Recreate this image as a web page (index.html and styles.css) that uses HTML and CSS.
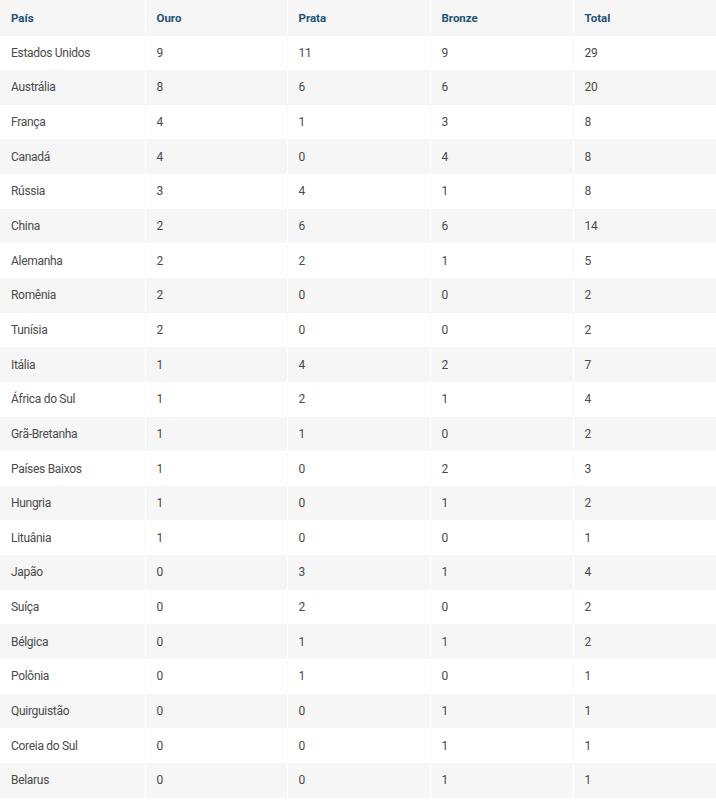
FILE: index.html
```html
<!DOCTYPE html>
<html lang="pt">
<head>
<meta charset="utf-8">
<link rel="stylesheet" href="styles.css">
</head>
<body>
<table class="medals">
<colgroup>
<col class="c-country"><col class="c-gold"><col class="c-silver"><col class="c-bronze"><col class="c-total">
</colgroup>
<thead>
<tr><th>País</th><th>Ouro</th><th>Prata</th><th>Bronze</th><th>Total</th></tr>
</thead>
<tbody>
<tr><td>Estados Unidos</td><td>9</td><td>11</td><td>9</td><td>29</td></tr>
<tr><td>Austrália</td><td>8</td><td>6</td><td>6</td><td>20</td></tr>
<tr><td>França</td><td>4</td><td>1</td><td>3</td><td>8</td></tr>
<tr><td>Canadá</td><td>4</td><td>0</td><td>4</td><td>8</td></tr>
<tr><td>Rússia</td><td>3</td><td>4</td><td>1</td><td>8</td></tr>
<tr><td>China</td><td>2</td><td>6</td><td>6</td><td>14</td></tr>
<tr><td>Alemanha</td><td>2</td><td>2</td><td>1</td><td>5</td></tr>
<tr><td>Romênia</td><td>2</td><td>0</td><td>0</td><td>2</td></tr>
<tr><td>Tunísia</td><td>2</td><td>0</td><td>0</td><td>2</td></tr>
<tr><td>Itália</td><td>1</td><td>4</td><td>2</td><td>7</td></tr>
<tr><td>África do Sul</td><td>1</td><td>2</td><td>1</td><td>4</td></tr>
<tr><td>Grã-Bretanha</td><td>1</td><td>1</td><td>0</td><td>2</td></tr>
<tr><td>Países Baixos</td><td>1</td><td>0</td><td>2</td><td>3</td></tr>
<tr><td>Hungria</td><td>1</td><td>0</td><td>1</td><td>2</td></tr>
<tr><td>Lituânia</td><td>1</td><td>0</td><td>0</td><td>1</td></tr>
<tr><td>Japão</td><td>0</td><td>3</td><td>1</td><td>4</td></tr>
<tr><td>Suíça</td><td>0</td><td>2</td><td>0</td><td>2</td></tr>
<tr><td>Bélgica</td><td>0</td><td>1</td><td>1</td><td>2</td></tr>
<tr><td>Polônia</td><td>0</td><td>1</td><td>0</td><td>1</td></tr>
<tr><td>Quirguistão</td><td>0</td><td>0</td><td>1</td><td>1</td></tr>
<tr><td>Coreia do Sul</td><td>0</td><td>0</td><td>1</td><td>1</td></tr>
<tr><td>Belarus</td><td>0</td><td>0</td><td>1</td><td>1</td></tr>
</tbody>
</table>
</body>
</html>
```

FILE: styles.css
```css
html, body {
  margin: 0;
  padding: 0;
  background: #ffffff;
}
body {
  font-family: Roboto, "Liberation Sans", sans-serif;
}
.medals {
  width: 716px;
  border-collapse: collapse;
  table-layout: fixed;
}
.c-country { width: 145px; }
.c-gold { width: 142px; }
.c-silver { width: 143px; }
.c-bronze { width: 143px; }
.c-total { width: 143px; }
.medals th,
.medals td {
  height: 34.65px;
  padding: 0 0 0 11px;
  text-align: left;
  vertical-align: middle;
  border-left: 1px solid #ffffff;
  box-sizing: border-box;
}
.medals th:first-child,
.medals td:first-child {
  border-left: none;
}
.medals th {
  height: 35.5px;
  background: #f6f6f6;
  color: #1d5277;
  font-size: 11.5px;
  font-weight: 700;
}
.medals td {
  color: #4a4a4a;
  font-size: 12px;
  letter-spacing: -0.3px;
}
.medals tbody tr:nth-child(even) td {
  background: #f6f6f6;
}
.medals tbody tr:nth-child(odd) td {
  background: #ffffff;
  border-left-color: #f9f9f9;
}
```
